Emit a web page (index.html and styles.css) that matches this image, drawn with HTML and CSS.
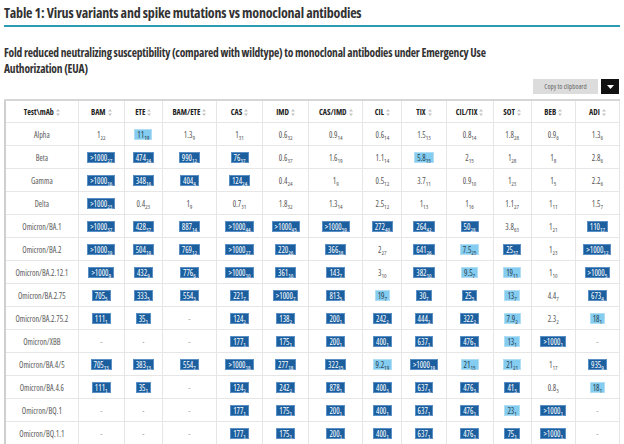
FILE: index.html
```html
<!DOCTYPE html>
<html>
<head>
<meta charset="utf-8">
<link rel="stylesheet" href="styles.css">
</head>
<body>
<div class="page">
  <h1 class="title">Table 1: Virus variants and spike mutations vs monoclonal antibodies</h1>
  <h2 class="subtitle">Fold reduced neutralizing susceptibility (compared with wildtype) to monoclonal antibodies under Emergency Use Authorization (EUA)</h2>
  <div class="toolbar">
    <button class="copy-btn">Copy to clipboard</button>
    <button class="menu-btn"><svg width="7" height="4" viewBox="0 0 7 4"><path d="M0 0H7L3.5 4Z" fill="#fff"/></svg></button>
  </div>
  <table class="grid" id="grid">
    <colgroup>
      <col class="c-test"><col class="c46"><col class="c38"><col class="c54"><col class="c46"><col class="c46"><col class="c54"><col class="c39"><col class="c44"><col class="c47"><col class="c38"><col class="c44"><col class="c44">
    </colgroup>
    <thead><tr id="head"></tr></thead>
    <tbody id="body"></tbody>
  </table>
</div>
<script src="app.js"></script>
</body>
</html>
```

FILE: app.js
```js
var heads = ["Test\\mAb","BAM","ETE","BAM/ETE","CAS","IMD","CAS/IMD","CIL","TIX","CIL/TIX","SOT","BEB","ADI"];
var rows = [
 ["Alpha","1_22","11_19_L","1.3_9","1_31","0.6_32","0.9_14","0.6_14","1.5_13","0.8_14","1.8_28","0.9_6","1.3_6"],
 ["Beta",">1000_27_D","474_24_D","990_12_D","76_37_D","0.6_37","1.6_19","1.1_14","5.8_15_L","2_15","1_28","1_8","2.8_6"],
 ["Gamma",">1000_16_D","348_16_D","404_4_D","124_24_D","0.4_24","1_9","0.5_12","3.7_11","0.9_10","1_23","1_5","2.2_6"],
 ["Delta",">1000_23_D","0.4_23","1_9","0.7_31","1.8_32","1.3_14","2.5_12","1_13","1_16","1.1_27","1_11","1.5_7"],
 ["Omicron/BA.1",">1000_37_D","428_37_D","887_14_D",">1000_44_D",">1000_45_D",">1000_59_D","272_40_D","264_42_D","50_28_D","3.8_63","1_21","110_17_D"],
 ["Omicron/BA.2",">1000_19_D","504_19_D","769_12_D",">1000_27_D","220_26_D","366_18_D","2_27","641_26_D","7.5_25_L","25_37_D","1_23",">1000_12_D"],
 ["Omicron/BA.2.12.1",">1000_9_D","432_9_D","776_6_D",">1000_10_D","361_10_D","143_7_D","3_10","382_10_D","9.5_7_L","19_11_L","1_10",">1000_5_D"],
 ["Omicron/BA.2.75","705_5_D","333_5_D","554_3_D","221_7_D",">1000_7_D","813_5_D","19_7_L","30_7_D","25_5_D","13_7_L","4.4_7","673_4_D"],
 ["Omicron/BA.2.75.2","111_1_D","35_1_D","-","124_2_D","138_2_D","200_1_D","242_2_D","444_2_D","322_2_D","7.9_2_L","2.3_2","18_1_L"],
 ["Omicron/XBB","-","-","-","177_1_D","175_1_D","200_1_D","400_1_D","637_1_D","476_1_D","13_1_L",">1000_1_D","-"],
 ["Omicron/BA.4/5","705_13_D","383_13_D","554_7_D",">1000_18_D","277_18_D","322_15_D","9.2_19_L",">1000_19_D","21_15_L","21_21_L","1_17","935_9_D"],
 ["Omicron/BA.4.6","111_1_D","35_1_D","-","124_2_D","242_2_D","878_1_D","400_3_D","637_3_D","476_3_D","41_3_D","0.8_3","18_1_L"],
 ["Omicron/BQ.1","-","-","-","177_1_D","175_1_D","200_1_D","400_1_D","637_1_D","476_1_D","23_1_L",">1000_1_D","-"],
 ["Omicron/BQ.1.1","-","-","-","177_1_D","175_1_D","200_1_D","400_1_D","637_1_D","476_1_D","75_1_D",">1000_1_D","-"]
];
var sortIcon = '<svg class="sort" width="4" height="7" viewBox="0 0 4 7"><path d="M2 0L4 2.6H0Z M2 7L0 4.4H4Z" fill="#c4c4c4"/></svg>';
var head = document.getElementById("head");
heads.forEach(function (h) {
  var th = document.createElement("th");
  th.innerHTML = '<span class="h-label"></span>' + sortIcon;
  th.firstChild.textContent = h;
  head.appendChild(th);
});
var body = document.getElementById("body");
rows.forEach(function (r) {
  var tr = document.createElement("tr");
  r.forEach(function (v, i) {
    var td = document.createElement("td");
    if (i === 0) {
      td.className = "name";
      td.textContent = v;
    } else if (v === "-") {
      td.className = "dash";
      td.textContent = "-";
    } else {
      var p = v.split("_");
      var span = document.createElement("span");
      span.className = p[2] === "D" ? "val dark" : (p[2] === "L" ? "val light" : "val");
      span.appendChild(document.createTextNode(p[0]));
      var sub = document.createElement("sub");
      sub.textContent = p[1];
      span.appendChild(sub);
      td.appendChild(span);
    }
    tr.appendChild(td);
  });
  body.appendChild(tr);
});
```

FILE: styles.css
```css
html, body {
  margin: 0;
  padding: 0;
  background: #fff;
}
.page {
  padding: 0 4px;
  width: 616px;
}
.title {
  margin: 0;
  padding-top: 4px;
  padding-bottom: 3px;
  font-family: "Open Sans", sans-serif;
  font-stretch: 80%;
  font-weight: 700;
  font-size: 14px;
  line-height: 18px;
  color: #333;
  border-bottom: 2px solid #2b9ab3;
  letter-spacing: -0.2px;
}
.subtitle {
  margin: 18px 0 0 0;
  font-family: "Open Sans", sans-serif;
  font-stretch: 80%;
  font-weight: 700;
  font-size: 11.5px;
  line-height: 16px;
  color: #333;
  letter-spacing: -0.2px;
  width: 500px;
}
.toolbar {
  display: flex;
  justify-content: flex-end;
  gap: 3px;
  margin-top: 2px;
  height: 15px;
  padding-right: 1px;
}
.copy-btn {
  width: 65px;
  height: 15px;
  border: 0;
  padding: 0;
  background: #dcdcdc;
  color: #666;
  font-family: "Open Sans", sans-serif;
  font-stretch: 75%;
  font-size: 7px;
}
.menu-btn {
  width: 18px;
  height: 15px;
  border: 0;
  padding: 0;
  background: #111;
  display: flex;
  align-items: center;
  justify-content: center;
}
.grid {
  margin-top: 5px;
  width: 616px;
  table-layout: fixed;
  border-collapse: collapse;
  border-top: 2px solid #d6d6d6;
  border-left: 2px solid #cfcfcf;
  border-right: 1px solid #e3e3e3;
  font-family: "Open Sans", sans-serif;
  font-stretch: 75%;
  font-size: 8px;
  color: #555;
}
.c-test { width: 73px; }
.c38 { width: 38px; }
.c39 { width: 39px; }
.c44 { width: 44px; }
.c46 { width: 46px; }
.c47 { width: 47px; }
.c54 { width: 54px; }
.grid th, .grid td {
  border: 1px solid #e6e6e6;
  text-align: center;
  padding: 0;
  white-space: nowrap;
}
.grid th {
  height: 21px;
  font-weight: 700;
  color: #222;
}
.grid td {
  height: 22px;
}
.sort {
  margin-left: 2px;
  vertical-align: -1px;
}
.name {
  color: #5a5a5a;
}
.dash {
  color: #999;
}
.val {
  display: inline-block;
  padding: 0 2px;
  line-height: 9px;
}
.val sub {
  font-size: 6px;
  vertical-align: -1.5px;
  line-height: 0;
}
.dark {
  background: #1c5f9f;
  color: #fff;
  border: 1px solid #5a90c6;
}
.light {
  background: #84cdf0;
  color: #2a4050;
  border: 1px solid #b2def4;
}
```
